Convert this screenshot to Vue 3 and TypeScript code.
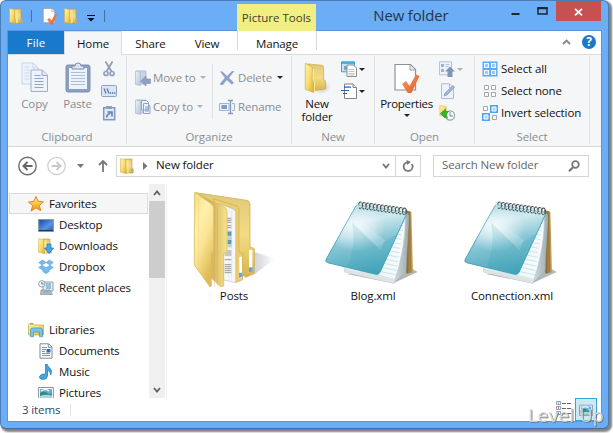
<script setup lang="ts">
interface TreeItem { label: string; icon: string; root?: boolean; active?: boolean }
interface FileItem { name: string; icon: string }

const tabs: { label: string; width: number; kind: string }[] = [
  { label: 'File', width: 56, kind: 'primary' },
  { label: 'Home', width: 58, kind: 'current' },
  { label: 'Share', width: 57, kind: '' },
  { label: 'View', width: 56, kind: '' },
]
const tree: TreeItem[] = [
  { label: 'Favorites', icon: 'star', root: true, active: true },
  { label: 'Desktop', icon: 'desktop' },
  { label: 'Downloads', icon: 'downloads' },
  { label: 'Dropbox', icon: 'dropbox' },
  { label: 'Recent places', icon: 'recent' },
]
const libraries: TreeItem[] = [
  { label: 'Libraries', icon: 'libraries', root: true },
  { label: 'Documents', icon: 'document' },
  { label: 'Music', icon: 'music' },
  { label: 'Pictures', icon: 'pictures' },
]
const files: FileItem[] = [
  { name: 'Posts', icon: 'posts' },
  { name: 'Blog.xml', icon: 'notepad' },
  { name: 'Connection.xml', icon: 'notepad' },
]
const selects = [
  { label: 'Select all', icon: 'selall' },
  { label: 'Select none', icon: 'selnone' },
  { label: 'Invert selection', icon: 'selinv' },
]
const rings = Array.from({ length: 13 }, (_, i) => i)
const rules = Array.from({ length: 15 }, (_, i) => i)
</script>

<template>
  <svg class="sprite" width="0" height="0">
    <defs>
      <linearGradient id="gFold" x1="0" y1="0" x2="1" y2="1"><stop offset="0" stop-color="#fff3a6" /><stop offset=".5" stop-color="#f8dd72" /><stop offset="1" stop-color="#d9ac35" /></linearGradient>
      <linearGradient id="gFront" x1="0" y1="0" x2=".5" y2="1"><stop offset="0" stop-color="#f5dd80" /><stop offset=".35" stop-color="#fff0aa" /><stop offset=".6" stop-color="#fbe594" /><stop offset="1" stop-color="#e0ba55" /></linearGradient>
      <linearGradient id="gBack" x1="0" y1="0" x2="0" y2="1"><stop offset="0" stop-color="#e0c878" /><stop offset=".5" stop-color="#f3dc84" /><stop offset="1" stop-color="#d9b34c" /></linearGradient>
      <linearGradient id="gMid" x1="0" y1="0" x2="1" y2="0"><stop offset=".4" stop-color="#d2b057" /><stop offset="1" stop-color="#f8e38f" /></linearGradient>
      <linearGradient id="gGhost" x1="0" y1="0" x2="1" y2="1"><stop offset="0" stop-color="#edf3fa" /><stop offset="1" stop-color="#b4c3d9" /></linearGradient>
      <linearGradient id="gGlass" x1=".35" y1="0" x2=".6" y2="1"><stop offset="0" stop-color="#a5d4e0" /><stop offset=".25" stop-color="#cfe9ef" /><stop offset=".55" stop-color="#83c4d4" /><stop offset="1" stop-color="#45a3b9" /></linearGradient>
      <radialGradient id="gShine" cx=".38" cy=".32" r=".36"><stop offset="0" stop-color="#fff" stop-opacity=".8" /><stop offset="1" stop-color="#fff" stop-opacity="0" /></radialGradient>
      <linearGradient id="gSheet" x1="0" y1="0" x2="1" y2="0"><stop offset="0" stop-color="#e5edf0" /><stop offset="1" stop-color="#f8fcfd" /></linearGradient>
      <linearGradient id="gSide" x1="0" y1="0" x2="1" y2="0"><stop offset="0" stop-color="#dfe6e9" /><stop offset="1" stop-color="#9dafb5" /></linearGradient>
      <linearGradient id="gWood" x1="0" y1="0" x2="1" y2="0"><stop offset="0" stop-color="#775b2c" /><stop offset="1" stop-color="#cfa55a" /></linearGradient>
      <linearGradient id="gShade" x1="0" y1="0" x2="1" y2="0"><stop offset="0" stop-color="#555e66" stop-opacity=".4" /><stop offset="1" stop-color="#555e66" stop-opacity="0" /></linearGradient>
      <linearGradient id="gScreen" x1="0" y1="0" x2="1" y2="1"><stop offset="0" stop-color="#1b449e" /><stop offset=".6" stop-color="#5794e5" /><stop offset="1" stop-color="#2459b1" /></linearGradient>
      <linearGradient id="gStar" x1="0" y1="0" x2="0" y2="1"><stop offset="0" stop-color="#fff0a2" /><stop offset=".6" stop-color="#ffb92c" /><stop offset="1" stop-color="#f38b1e" /></linearGradient>
      <linearGradient id="gTick" x1="0" y1="0" x2="1" y2="1"><stop offset="0" stop-color="#ff9a5b" /><stop offset="1" stop-color="#dc5c2c" /></linearGradient>
      <filter id="soft" x="-30%" y="-30%" width="160%" height="160%"><feGaussianBlur stdDeviation="2.2" /></filter>

      <symbol id="folder" viewBox="0 0 14 16">
        <path d="M5 1h7v9l1.200 1v4H5z" fill="url(#gBack)" stroke="#c49b38" stroke-width=".6" />
        <path d="M.5.6l5 1v8.700l1 .8v4.400L.5 14.300z" fill="url(#gFold)" stroke="#d2ab45" stroke-width=".5" />
        <path d="M6.200 2l2.600.4v12.200l-1.800 1z" fill="#f8e28b" /><path d="M12 10.600v3" stroke="#5aabe8" />
      </symbol>
      <symbol id="bigfolder" viewBox="0 0 28 34">
        <path d="M12 30l9 1 6-5-6-3z" fill="#6b727b" opacity=".4" filter="url(#soft)" />
        <path d="M4 2l15 1.500q2 .2 2 2V19l2 1v8.500L8 31z" fill="url(#gBack)" stroke="#c49831" stroke-width=".6" />
        <path d="M1.500 1.200l7.500 4.200v14l1.500 1v12L1.500 29z" fill="url(#gFold)" stroke="#c89e37" stroke-width=".6" />
        <path d="M10 7.500v12l1.300.8v11.500" stroke="#fff1a1" fill="none" />
      </symbol>
      <symbol id="check" viewBox="0 0 28 32">
        <path d="M2 2.500h15.500l5 5V28H2z" fill="#fff" stroke="#919191" stroke-width="1.2" />
        <path d="M17 3v5h5" fill="#eee" stroke="#a1a1a1" />
        <path d="M9 22l4-3 3.500 5 6.500-11.500 3.500 1.500L18.500 31h-3.800z" fill="url(#gTick)" />
      </symbol>
      <symbol id="copy" viewBox="0 0 28 32">
        <g stroke="#aabfdb" fill="#eef3fb"><path d="M1 1h11l5.500 5v16H1z" stroke="#c6d6e9" /><path d="M12 1v5h5" stroke="#c6d6e9" fill="none" /><path d="M10 8h11.500l5 5v16.500H10z" stroke="#9eafc7" /><path d="M21 8v5.500h5.500" fill="#dce6f3" stroke="#9eafc7" /></g>
        <path d="M3.500 5h5M3.500 8h5M3.500 11h5M3.500 14h5M3.500 17h5" stroke="#cad9ec" /><path d="M13.500 13.500h6M13.500 16.500h9M13.500 19.500h9M13.500 22.500h9M13.500 25.500h9" stroke="#8ba6cc" />
      </symbol>
      <symbol id="paste" viewBox="0 0 26 32">
        <rect x="1" y="3" width="24" height="27" rx="2" fill="#8ca0be" stroke="#7d91b0" /><path d="M4 6h18v21H4z" fill="#edf3fc" /><path d="M6 10.500h14M6 13.500h14M6 16.500h14M6 19.500h14M6 22.500h14" stroke="#aebfda" />
        <path d="M7 4h3q0-3 3-3t3 3h3v3H7z" fill="#dce5f2" stroke="#7f91ad" />
      </symbol>
      <symbol id="cut" viewBox="0 0 16 16">
        <path d="M4.500.5l6 10M11.500.5l-6 10" stroke="#8f9bb0" stroke-width="1.700" fill="none" /><circle cx="5" cy="12.500" r="2" fill="none" stroke="#8fa3c4" stroke-width="1.700" /><circle cx="11" cy="12.500" r="2" fill="none" stroke="#8fa3c4" stroke-width="1.700" />
      </symbol>
      <symbol id="path" viewBox="0 0 16 16">
        <rect x=".5" y="2.500" width="15" height="11" rx="1" fill="#d9e4f4" stroke="#8ea3c2" /><path d="M3 5.500l2 5M6 5.500l2 5" stroke="#5a769f" stroke-width="1.2" /><path d="M8.800 10h1.400M11 10h1.400M13.200 10h1.200" stroke="#5a769f" stroke-width="1.500" />
      </symbol>
      <symbol id="pasteshort" viewBox="0 0 16 16">
        <rect x="2.700" y="2.700" width="11" height="12" fill="#e1ebf7" stroke="#8398ba" stroke-width="1.500" /><path d="M5 1h6v3H5z" fill="#8da1c0" /><path d="M6 12.500q-.8-3 3.500-4.300M6.500 7h4.500v4.500" fill="none" stroke="#6280ad" stroke-width="1.600" />
      </symbol>
      <symbol id="ghost" viewBox="0 0 16 16"><path d="M1 1h10v13H1z" fill="#c8d5e6" stroke="#aebed4" /><path d="M.5 1l5 1v13.500l-5-1z" fill="url(#gGhost)" stroke="#a9bad2" stroke-width=".6" /></symbol>
      <symbol id="moveto" viewBox="0 0 16 16"><use href="#ghost" width="16" height="16" /><path d="M5.500 11L11 6v3h4.500v4.400H11V16z" fill="#8fa1be" stroke="#7890b3" stroke-width=".6" /></symbol>
      <symbol id="copyto" viewBox="0 0 16 16"><use href="#ghost" width="16" height="16" /><path d="M6.500 1.500h5l2 2V11h-7zM8.500 4.500h4l2.500 2.500V14.500H8.500z" fill="#edf3fc" stroke="#8fa5c6" /><path d="M10 8h3M10 10h4M10 12h4" stroke="#819dc5" /></symbol>
      <symbol id="delete" viewBox="0 0 16 16"><path d="M1 1.500q1.200-.8 2.700.3L8 6l4.500-4.500q1.500-1 3-.4L10 7.800l4.700 4.700q.2 1.800-2.200 1.700L7.800 9.900 4 14.800q-2.500.7-3.200-.9L5.800 7.800z" fill="#8ca2c6" /></symbol>
      <symbol id="rename" viewBox="0 0 16 16"><path d="M.5 4.500H10v7H.500zM13 4.500h2.500v7H13" fill="#edf2fa" stroke="#a2b4d1" /><path d="M2.500 6H8v4H2.500z" fill="#819bc5" /><path d="M9 1.500h5M9 14.500h5M11.500 1.500v13" stroke="#8399bb" stroke-width="1.300" /></symbol>
      <symbol id="newitem" viewBox="0 0 16 16"><path d="M.5.8h13v10H.500z" fill="#c9e4f6" stroke="#39a1d5" /><path d="M1 1h12v2H1z" fill="#4aafe1" /><path d="M3 5q4-1 3 4H3z" fill="#76a7ca" /><path d="M6 4h6.500l3 3v8.500H6z" fill="#fff" stroke="#8d8d8d" /><path d="M7.500 8.500h6M7.500 10.500h6M7.500 12.500h6M7.500 14h6" stroke="#aeb5bc" stroke-width=".8" /></symbol>
      <symbol id="easy" viewBox="0 0 16 16"><path d="M3.500 1H12l3.500 3.500v11h-12z" fill="#fff" stroke="#838383" /><path d="M12 1v3.500h3.500" fill="#eee" stroke="#838383" /><path d="M3 4.200h7M0 7.500h8M2 10.500h4" stroke="#1c62d1" stroke-width="1.200" /></symbol>
      <symbol id="openwith" viewBox="0 0 16 16"><path d="M.5.8h12v13H.500z" fill="#edf3fc" stroke="#b4c4da" /><path d="M2 3h3v3H2zM2 8h3v3H2z" fill="#9eb2d1" /><path d="M6.500 3.500h4M6.500 5.500h3" stroke="#b2c2da" /><path d="M11 5.500l5 5h-2.500V16h-5v-5.500H6z" fill="#8196b6" /></symbol>
      <symbol id="edit" viewBox="0 0 16 16"><path d="M2.500.8h8l4 4v10.700h-12z" fill="#edf3fc" stroke="#adbdd5" /><path d="M10.500 1v4h4" fill="none" stroke="#adbdd5" /><path d="M5 13l1-3 8-7.500 1.600 1.700L8 12z" fill="#a4b7d4" stroke="#7d96bd" stroke-width=".7" /></symbol>
      <symbol id="history" viewBox="0 0 16 16"><path d="M.8.5l6.500 1v10l-6.500-1z" fill="url(#gFold)" stroke="#dfbd57" stroke-width=".6" /><circle cx="11" cy="10.500" r="4.600" fill="#f4f9fc" stroke="#98a4ae" stroke-width="1.200" /><path d="M11 7v4h3" stroke="#72899c" fill="none" /><path d="M1.500 8.500l5-4.500v2.500h3q-2 1-2 4l1 2.500Q6 12.600 5.800 10.800v2z" fill="#38b52e" stroke="#239423" stroke-width=".6" /></symbol>
      <symbol id="selall" viewBox="0 0 16 16"><path d="M.5.500h15v15H.500z" fill="#54aafc" /><path d="M2.500 2.500h4v4h-4zM9.500 2.500h4v4h-4zM2.500 9.500h4v4h-4zM9.500 9.500h4v4h-4z" fill="#91c8ff" stroke="#eff8ff" stroke-width="1.200" /></symbol>
      <symbol id="selnone" viewBox="0 0 16 16"><path d="M2.500 2.500h4v4h-4zM9.500 2.500h4v4h-4zM2.500 9.500h4v4h-4zM9.500 9.500h4v4h-4z" fill="#fff" stroke="#a6a6a6" /></symbol>
      <symbol id="selinv" viewBox="0 0 16 16"><path d="M1.500 1.500h4v4h-4zM10.500 10.500h4v4h-4z" fill="#fff" stroke="#a6a6a6" /><path d="M8 0h8v8H8zM0 8h8v8H0z" fill="#4ba6fb" /><path d="M10 2h4v4h-4zM2 10h4v4H2z" fill="#a4d2fd" stroke="#fff" /></symbol>

      <symbol id="star" viewBox="0 0 16 16"><path d="M8 .4l2.200 4.900 5.300.5-4.100 3.600 1.500 5.300L8 11.900l-4.900 3.200 1.500-5.500L.5 6l5.300-.6z" fill="url(#gStar)" stroke="#df7c25" stroke-width=".9" /></symbol>
      <symbol id="desktop" viewBox="0 0 16 16"><path d="M.6 2.500h14.800v11.800H.6z" fill="url(#gScreen)" stroke="#8a9aab" stroke-width="1.200" /><path d="M1 13h14v1H1z" fill="#24374f" /></symbol>
      <symbol id="downloads" viewBox="0 0 16 16"><use href="#folder" width="14" height="16" /><path d="M9 6h4v4h2.700L11 15.500 6.500 10H9z" fill="#44a6ec" stroke="#2474b8" stroke-width=".7" /></symbol>
      <symbol id="dropbox" viewBox="0 0 16 16"><path d="M4.700 1L8 3.500 4 6 .7 3.500zM11.300 1l4 2.500L12 6 8 3.500zM.7 8.500L4 6.200l4 2.500-3.300 2.500zM8 8.700l4-2.500 3.300 2.300-4 2.700zM4.500 12.200L8 9.600l3.500 2.600L8 14.800z" fill="#72b9ed" stroke="#4a9cda" stroke-width=".5" /></symbol>
      <symbol id="recent" viewBox="0 0 16 16"><path d="M5 2h10v9H5z" fill="#e4edf3" stroke="#91a1ac" /><path d="M8 4h5M8 6h5M8 8h5" stroke="#5393bd" /><path d="M3 10h9l2.500 4.500h-12z" fill="#b7bdc0" stroke="#7b8589" stroke-width=".6" /><path d="M5 11h6v2H5z" fill="#74bcce" /><circle cx="3.800" cy="3.800" r="3.200" fill="#f3f8fa" stroke="#8fa2ae" /><path d="M3.800 2v2h2" fill="none" stroke="#637887" /></symbol>
      <symbol id="libraries" viewBox="0 0 16 16"><path d="M.5 2.500V13h15V3h-9l-1-1.600h-4z" fill="url(#gFold)" stroke="#caa647" stroke-width=".7" /><path d="M2 2h3" stroke="#72b641" stroke-width="1.200" /><path d="M2.500 14.700V8q0-2 2-2h8q2 0 2 2v6.700h-3V10h-6v4.700z" fill="#74c7e8" stroke="#3e95bc" stroke-width=".7" /></symbol>
      <symbol id="document" viewBox="0 0 16 16"><path d="M2 .8h8.500L14 4v11.200H2z" fill="#fff" stroke="#838b91" /><path d="M10.300 1v3.300H14" fill="none" stroke="#838b91" /><path d="M4 4.500h5M4 6.500h4M4 8.500h3M4 10.500h8M4 12.500h8" stroke="#8298ae" /><path d="M8.500 6h4v3.500h-4z" fill="#2b6dbc" /></symbol>
      <symbol id="music" viewBox="0 0 16 16"><path d="M7.500 0h1.500q.6 2.500 2.800 4 3 2.800.9 7 .3-3.800-3.200-4.800v5.800q-.6 3.500-4.800 3.500Q1 15 1.500 12.500 2.600 9.500 7.500 10z" fill="#45a6e2" stroke="#1c70af" stroke-width=".7" /></symbol>
      <symbol id="pictures" viewBox="0 0 16 16"><path d="M.6 2.500h14.800v11.800H.6z" fill="#fff" stroke="#8b959b" /><path d="M2 4h12v9H2z" fill="#5baee3" /><path d="M2 8q4-3 7 0t5-.5V13H2z" fill="#3c8577" /><path d="M2 11q5-2 12-.5V13H2z" fill="#a4d6df" /><path d="M3 6q5-3 8 0" stroke="#e8f6fe" stroke-width="1.500" fill="none" /></symbol>

      <symbol id="posts" viewBox="0 0 96 96">
        <g transform="translate(-5 -11) scale(.3333)">
          <path d="M195 290l30-8 60-46-62-20z" fill="url(#gShade)" />
          <path d="M48 38l152 23q10 2 10 11v128l13 6v74l-25 12-28-20z" fill="url(#gBack)" stroke="#d0b35c" stroke-width="2.500" />
          <path d="M207 210h10v64l-10 4z" fill="#fff" /><path d="M207 262h11v12l-11 4z" fill="#61a4ec" />
          <path d="M100 56l70 22q7 2 7 9v128l11 6v78l-18 8-20-10z" fill="#ebcd70" stroke="#cfad4e" stroke-width="2" />
          <path d="M178 230h8v62l-8 4z" fill="#fff" /><path d="M177 278h10v12l-10 4z" fill="#61a4ec" />
          <path d="M118 72l40 14 9 9v213l-36-8z" fill="#f7f7f7" stroke="#aab0b3" stroke-width="1.500" />
          <path d="M147 84v216M155 88v214" stroke="#d9dcdd" stroke-width="1.500" />
          <path d="M134 115h20M134 121h20M134 127h20M134 137h20M134 143h20M134 213h20M134 219h20M134 225h20M134 239h20M134 254h20M134 260h20M134 266h20M134 272h20M134 278h20" stroke="#85888b" stroke-width="2.500" />
          <path d="M142 152h13v50h-13z" fill="#b6d3de" /><path d="M143 155h11v12h-11zM143 180h11v12h-11z" fill="#5c9db0" />
          <path d="M58 45l74 36q9 4 9 12v122l-10 7v96l-8 3-32-30z" fill="url(#gMid)" stroke="#d5b75b" stroke-width="2" />
          <path d="M104 75v245M112 78v240" stroke="#c3a04c" stroke-width="1.500" opacity=".6" />
          <path d="M44 37l48 33q9 7 9 16v126q0 4-7 8v98l-3 4-48-67z" fill="url(#gFront)" stroke="#d9bd69" stroke-width="2.500" />
          <path d="M56 50v220" stroke="#e9cc72" stroke-width="2" opacity=".6" />
        </g>
      </symbol>
      <symbol id="notepad" viewBox="0 0 96 96">
        <g transform="translate(-14 -11) scale(.3333)">
          <path d="M110 282l140 28 73-34-20-12z" fill="#59656b" opacity=".45" filter="url(#soft)" />
          <path d="M286 90l18 5 5 182-20 4z" fill="url(#gWood)" /><path d="M298 95l4 182" stroke="#8e6e38" stroke-width="2" />
          <path d="M280 96q18 0 16 20l-5 90-4 70-37 34-10-10z" fill="url(#gSide)" stroke="#9eb0b5" stroke-width="2" />
          <path d="M140 82l146 18q3 100-34 210L104 276v-12z" fill="url(#gSheet)" stroke="#b6c4c9" stroke-width="2" />
          <g stroke="#b3d9e3" stroke-width="2"><path v-for="n in rules" :key="n" :d="`M150 ${92 + n * 13}l${134 - n * 2} ${20 + n * .3}`" /></g>
          <path d="M104 266l148 33-2 11-146-34z" fill="#dde2e4" />
          <path d="M143 74l140 22q8 2 5 10l-78 171q-4 8-12 6L53 248q-9-3-4-11l87-156q3-6 7-7z" fill="url(#gGlass)" stroke="#45a4ba" stroke-width="3" />
          <path d="M143 74l140 22q8 2 5 10l-78 171q-4 8-12 6L53 248q-9-3-4-11l87-156q3-6 7-7z" fill="url(#gShine)" />
          <path d="M130 110l95 70-13 30-90-82z" fill="#e9f8fa" opacity=".22" /><path d="M126 128q14 66-14 134l86 20q7 2 12-6l52-116-60 40z" fill="#279bb1" opacity=".16" />
          <g fill="none" stroke="#46555b" stroke-width="3.500"><path v-for="n in rings" :key="n" :d="`M${147 + n * 11} ${84 + n * 1.500}l5 2M${146 + n * 11} ${72 + n * 1.500}q2-8 8-5 6 6 1 18`" /></g>
          <g fill="none" stroke="#d9dfdc" stroke-width="3.500"><path v-for="n in rings" :key="n" :d="`M${143 + n * 11} ${80 + n * 1.500}q-5-14 3-14`" /></g>
        </g>
      </symbol>
    </defs>
  </svg>

  <main class="desk">
    <section class="window">
      <header class="titlebar">
        <div class="quick">
          <svg width="14" height="16"><use href="#folder" width="14" height="16" /></svg><i class="tick" />
          <svg class="q2" width="16" height="18"><use href="#check" width="16" height="18" /></svg>
          <svg class="q3" width="14" height="16"><use href="#folder" width="14" height="16" /></svg>
          <svg class="q4" width="8" height="8" viewBox="0 0 8 8"><path d="M0 1.500h8" stroke="#080808" /><path d="M.5 4h7L4 7.500z" fill="#080808" /></svg><i class="tick last" />
        </div>
        <div class="context">Picture Tools</div>
        <h1>New folder</h1>
        <div class="controls">
          <svg width="37" height="20" viewBox="0 0 37 20"><path d="M.5 13h8" stroke="#202630" stroke-width="2" /><path d="M27 7.500h9V13h-9z" fill="none" stroke="#202630" stroke-width="1.500" /><path d="M26.300 7h10.500" stroke="#202630" stroke-width="2" /></svg>
          <button class="close"><svg width="9" height="8" viewBox="0 0 9 8"><path d="M1 .8l7 6.500M8 .8L1 7.300" stroke="#fff" stroke-width="1.800" /></svg></button>
        </div>
      </header>

      <div class="client">
        <nav class="tabs">
          <div v-for="tab in tabs" :key="tab.label" class="tab" :class="tab.kind" :style="{ width: tab.width + 'px' }">{{ tab.label }}</div>
          <div class="tab manage">Manage</div>
          <div class="tabtools"><svg width="9" height="6" viewBox="0 0 9 6"><path d="M1 5l3.500-3.500L8 5" fill="none" stroke="#858585" stroke-width="1.800" /></svg><span class="help">?</span></div>
        </nav>

        <div class="ribbon">
          <section class="group clipboard"><div class="body">
            <div class="big muted copy"><svg width="28" height="32"><use href="#copy" /></svg><span>Copy</span></div>
            <div class="big muted paste"><svg width="26" height="32"><use href="#paste" /></svg><span>Paste</span></div>
            <div class="stack"><div v-for="n in ['cut', 'path', 'pasteshort']" :key="n"><svg width="16" height="16"><use :href="'#' + n" /></svg></div></div>
          </div><footer>Clipboard</footer></section>

          <section class="group organize"><div class="body">
            <div class="pair left muted"><div><svg width="16" height="16"><use href="#moveto" /></svg><span>Move to</span><i class="caret pale" /></div><div><svg width="16" height="16"><use href="#copyto" /></svg><span>Copy to</span><i class="caret pale" /></div></div>
            <i class="inner" />
            <div class="pair right muted"><div><svg width="16" height="16"><use href="#delete" /></svg><span>Delete</span><i class="caret" /></div><div><svg width="16" height="16"><use href="#rename" /></svg><span>Rename</span></div></div>
          </div><footer>Organize</footer></section>

          <section class="group new"><div class="body">
            <div class="big nf"><svg width="28" height="32"><use href="#bigfolder" /></svg><span>New<br />folder</span></div>
            <div class="stack"><div v-for="n in ['newitem', 'easy']" :key="n"><svg width="16" height="16"><use :href="'#' + n" /></svg><i class="caret" /></div></div>
          </div><footer>New</footer></section>

          <section class="group open"><div class="body">
            <div class="big props"><svg width="28" height="32"><use href="#check" /></svg><span>Properties</span><i class="caret" /></div>
            <div class="stack"><div><svg width="16" height="16"><use href="#openwith" /></svg><i class="caret pale" /></div><div><svg width="16" height="16"><use href="#edit" /></svg></div><div><svg width="16" height="16"><use href="#history" /></svg></div></div>
          </div><footer>Open</footer></section>

          <section class="group select"><div class="body"><div class="stack">
            <div v-for="s in selects" :key="s.label"><svg width="16" height="16"><use :href="'#' + s.icon" /></svg><span>{{ s.label }}</span></div>
          </div></div><footer>Select</footer></section>
        </div>

        <div class="navrow">
          <svg class="arrows" width="92" height="22" viewBox="0 0 92 22">
            <circle cx="9.500" cy="11" r="8.700" fill="#fff" stroke="#6d6d6d" stroke-width="1.400" /><path d="M14.500 11h-9M9.500 7l-4 4 4 4" fill="none" stroke="#656565" stroke-width="2" />
            <circle cx="38.500" cy="11" r="8.700" fill="#fff" stroke="#cfcfcf" stroke-width="1.300" /><path d="M33.500 11h9M38.500 7l4 4-4 4" fill="none" stroke="#cacaca" stroke-width="2" />
            <path d="M59 9h7l-3.500 4z" fill="#777" /><path d="M85 17V6M81 10l4-4 4 4" fill="none" stroke="#777" stroke-width="1.800" />
          </svg>
          <div class="address"><svg width="14" height="16"><use href="#folder" width="14" height="16" /></svg><svg class="crumb" width="5" height="8"><path d="M0 0l4.500 4L0 8z" fill="#777" /></svg><span>New folder</span><svg class="down" width="8" height="6"><path d="M1 1l3 3.500L7 1" fill="none" stroke="#747474" stroke-width="1.800" /></svg><div class="refresh"><svg width="12" height="12" viewBox="0 0 12 12"><path d="M9.800 4A4.500 4.500 0 1 1 5 2.200" fill="none" stroke="#777" stroke-width="1.700" /><path d="M4.500 0l4.500 2-4 3z" fill="#777" /></svg></div></div>
          <div class="search"><span>Search New folder</span><svg width="12" height="12" viewBox="0 0 12 12"><circle cx="7.500" cy="4.500" r="3.300" fill="none" stroke="#777" stroke-width="1.800" /><path d="M5.300 7L1 11.300" stroke="#777" stroke-width="2.200" /></svg></div>
        </div>

        <div class="content">
          <aside>
            <div v-for="item in tree" :key="item.label" class="node" :class="{ root: item.root, active: item.active }"><svg width="16" height="16"><use :href="'#' + item.icon" /></svg><span>{{ item.label }}</span></div>
            <div class="gap" />
            <div v-for="item in libraries" :key="item.label" class="node" :class="{ root: item.root }"><svg width="16" height="16"><use :href="'#' + item.icon" /></svg><span>{{ item.label }}</span></div>
          </aside>
          <div class="scroll"><svg width="16" height="17"><path d="M5 11l3-3.500 3 3.500" fill="none" stroke="#606060" stroke-width="1.800" /></svg><i /><svg width="16" height="17"><path d="M5 7l3 3.500L11 7" fill="none" stroke="#606060" stroke-width="1.800" /></svg></div>
          <div class="files"><div v-for="file in files" :key="file.name" class="file"><svg width="96" height="96"><use :href="'#' + file.icon" /></svg><span>{{ file.name }}</span></div></div>
        </div>

        <footer class="status"><span>3 items</span><i /><svg class="list" width="16" height="14" viewBox="0 0 16 14"><path d="M.5.500h4v3h-4zM.5 5.500h4v3h-4zM.5 10.500h4v3h-4z" fill="#fff" stroke="#8da2b6" /><path d="M2 2h1M2 12h1" stroke="#356ba1" /><path d="M2 7h1" stroke="#d83434" stroke-width="1.500" /><path d="M6 2.500h4M11 2.500h4M6 7.500h4M11 7.500h4M6 12.500h4M11 12.500h4" stroke="#5b6572" /></svg><div class="large"><svg width="14" height="14"><use href="#pictures" /></svg></div></footer>
      </div>
    </section>
    <div class="mark">Level Up</div>
  </main>
</template>

<style>
body { margin: 0; background: #fff; overflow: hidden; }
</style>
<style scoped>
* { box-sizing: border-box; }
.sprite { position: absolute; }
svg { display: block; flex: none; overflow: visible; }
.desk { position: relative; width: 613px; height: 433px; overflow: hidden; background: #fff; font: 11.5px "Open Sans", "Noto Sans", sans-serif; letter-spacing: -.12px; color: #111; white-space: nowrap; }
.window { width: 609px; height: 429px; padding: 0 7px 7px; background: #6badf6; border: 1px solid #4a7db5; border-bottom-color: #3b6dac; border-radius: 6px; box-shadow: 2px 2px 2px 1px #444a; }
.titlebar { height: 30px; display: flex; position: relative; }
.quick { display: flex; align-items: center; width: 229px; height: 29px; padding-left: 1px; }
.tick { width: 1px; height: 12px; background: #47729d; margin-left: 8px; }
.q2 { margin-left: 10px; } .q3 { margin-left: 6px; } .q4 { margin-left: 9px; margin-top: 4px; } .tick.last { margin-left: 9px; }
.context { width: 79px; height: 27px; margin-top: 3px; background: #f1ef82; text-align: center; line-height: 28px; color: #414124; letter-spacing: 0; }
.context, .manage { position: relative; left: 1px; }
h1 { width: 197px; margin: 0; text-align: center; font-size: 14.900px; font-weight: 400; line-height: 29px; padding-right: 4px; color: #24364c; }
.controls { display: flex; }
.close { width: 45px; height: 20px; border: 0; padding: 2px 0 0; display: flex; align-items: center; justify-content: center; background: #c75050; margin-left: 8px; }
.client { width: 593px; height: 390px; background: #fff; outline: 1px solid #5796df; }
.tabs { display: flex; height: 24px; border-bottom: 1px solid #dadbdc; }
.tab { line-height: 25px; text-align: center; height: 23px; }
.tab.primary { background: #1979ca; color: #fff; line-height: 24px; letter-spacing: .2px; }
.tab.current { background: #f5f6f7; height: 24px; border: 1px solid #dadbdc; border-width: 1px 1px 0; line-height: 24px; }
.manage { width: 80px; height: 19px; margin-left: 1px; border: solid #d8dadd; border-width: 0 1px; }
.tabtools { margin-left: auto; display: flex; align-items: center; gap: 11px; padding: 0 5px 2px 0; }
.help { width: 14px; height: 14px; border-radius: 50%; background: #1979ca; color: white; font-weight: 700; font-size: 12px; line-height: 14px; text-align: center; }
.ribbon { height: 92px; background: #f5f6f7; border-bottom: 1px solid #d7d8d9; display: flex; }
.group { height: 91px; border-image: linear-gradient(transparent 2px, #dfe2e5 2px, #dfe2e5 88px, transparent 88px) 1; border-style: solid; border-width: 0 1px 0 0; }
.body { height: 72px; padding-top: 4px; display: flex; }
.group footer { text-align: center; color: #8c8f93; line-height: 19px; }
.clipboard { width: 119px; } .organize { width: 165px; } .new { width: 83px; } .open { width: 100px; } .select { width: 115px; }
.big { display: flex; flex-direction: column; align-items: center; padding-top: 3px; line-height: 13px; text-align: center; }
.big span { margin-top: 3px; }
.muted { color: #8a8c91; }
.copy { width: 43px; margin-left: 5px; } .paste { width: 43px; }
.clipboard .stack { margin-left: 2px; }
.stack { margin-top: -1px; }
.stack > div { display: flex; align-items: center; height: 22px; }
.caret { width: 0; height: 0; border: solid transparent; border-width: 3px 3px 0; border-top-color: #222; margin-left: 2px; }
.caret.pale { border-top-color: #adb0b4; }
.pair { padding-top: 4px; }
.pair > div { height: 29px; display: flex; align-items: center; gap: 2px; }
.pair.right > div { gap: 3px; }
.pair.left { width: 77px; margin-left: 8px; }
.inner { width: 1px; height: 55px; background: #e0e2e5; margin: 5px 6px 0 0; }
.nf { width: 44px; margin-left: 3px; margin-right: 2px; }
.props { width: 61px; margin-left: 1px; margin-right: 2px; letter-spacing: -.3px; } .props .caret { margin: 4px 0 0; }
.select .stack { margin-left: 7px; } .select .stack > div { gap: 3px; } .select .stack span { padding-bottom: 1px; }
.navrow { height: 37px; display: flex; align-items: center; padding-left: 10px; }
.arrows { margin-right: 6px; }
.address { width: 305px; height: 22px; border: 1px solid #d5d5d5; display: flex; align-items: center; padding-left: 3px; }
.address span, .search span { padding-bottom: 2px; }
.crumb { margin: 0 8px 0 9px; } .down { margin-left: auto; margin-right: 5px; }
.refresh { width: 25px; height: 20px; border-left: 1px solid #d5d5d5; display: flex; align-items: center; justify-content: center; }
.search { width: 156px; height: 22px; margin-left: 12px; border: 1px solid #d5d5d5; display: flex; align-items: center; justify-content: space-between; padding: 0 8px; color: #666; }
.content { height: 214px; display: flex; }
aside { width: 141px; height: 214px; padding-top: 9px; overflow: hidden; }
.node { height: 21px; display: flex; align-items: center; gap: 5px; padding-left: 30px; }
.node.root { padding-left: 20px; }
.node.active { width: 139px; margin-left: 1px; padding-left: 18px; background: #f6f6f6; border: 1px solid #dadada; }
.gap { height: 21px; }
.scroll { width: 16px; height: 214px; background: #f0f0f0; display: flex; flex-direction: column; }
.scroll i { height: 77px; background: #cdcdcd; margin-bottom: auto; }
.files { flex: 1; margin-left: 1px; border-left: 1px solid #f1f1f1; padding-top: 7px; display: flex; }
.file { width: 139px; display: flex; flex-direction: column; align-items: center; line-height: 16px; }
.file svg { margin-left: -7px; } .file span { margin-top: 1px; margin-left: -5px; }
.status { height: 23px; display: flex; align-items: center; padding-left: 14px; color: #26476c; }
.status i { width: 1px; height: 12px; background: #e6e6e6; margin-left: 10px; }
.list { margin-left: auto; margin-right: 3px; margin-top: -4px; }
.large { width: 22px; height: 23px; display: flex; align-items: center; justify-content: center; background: #cce8f5; border: 1px solid #35a4d9; margin-right: 4px; }
.mark { position: absolute; left: 528px; top: 406px; font: 17.700px "DejaVu Sans", sans-serif; color: #d6d6d6; text-shadow: 1px 1px 0 #777; opacity: .85; }
</style>
